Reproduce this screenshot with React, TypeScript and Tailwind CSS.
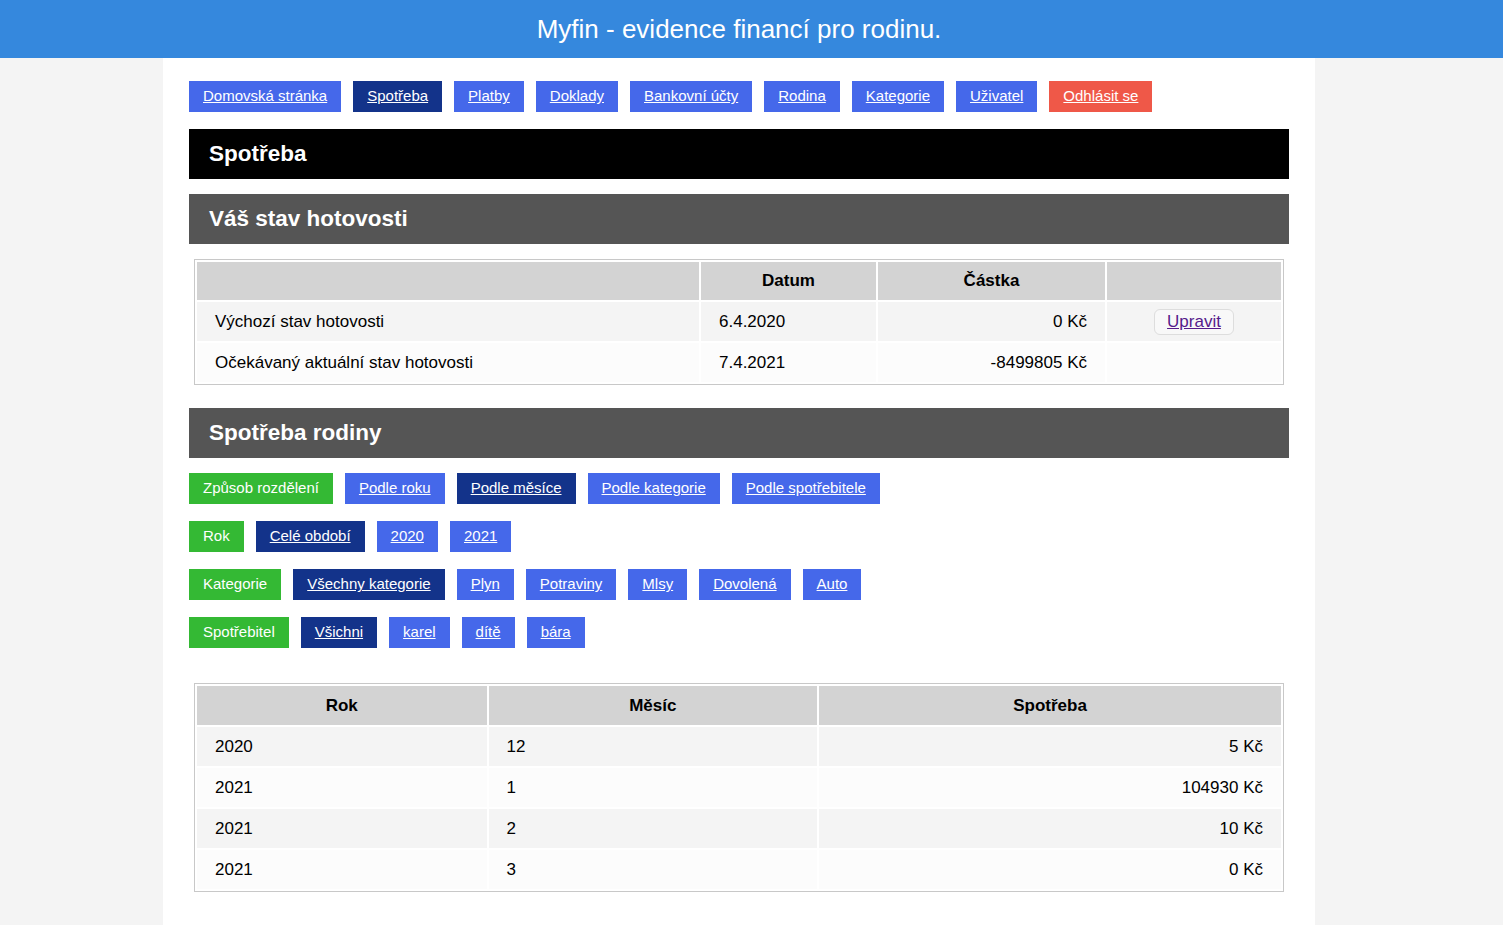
// Myfin – Spotřeba page
const nav = [
  { label: 'Domovská stránka' },
  { label: 'Spotřeba', active: true },
  { label: 'Platby' },
  { label: 'Doklady' },
  { label: 'Bankovní účty' },
  { label: 'Rodina' },
  { label: 'Kategorie' },
  { label: 'Uživatel' },
  { label: 'Odhlásit se', danger: true },
];

const filters = [
  {
    title: 'Způsob rozdělení',
    items: [
      { label: 'Podle roku' },
      { label: 'Podle měsíce', active: true },
      { label: 'Podle kategorie' },
      { label: 'Podle spotřebitele' },
    ],
  },
  {
    title: 'Rok',
    items: [{ label: 'Celé období', active: true }, { label: '2020' }, { label: '2021' }],
  },
  {
    title: 'Kategorie',
    items: [
      { label: 'Všechny kategorie', active: true },
      { label: 'Plyn' },
      { label: 'Potraviny' },
      { label: 'Mlsy' },
      { label: 'Dovolená' },
      { label: 'Auto' },
    ],
  },
  {
    title: 'Spotřebitel',
    items: [
      { label: 'Všichni', active: true },
      { label: 'karel' },
      { label: 'dítě' },
      { label: 'bára' },
    ],
  },
];

const spending = [
  { year: '2020', month: '12', amount: '5 Kč' },
  { year: '2021', month: '1', amount: '104930 Kč' },
  { year: '2021', month: '2', amount: '10 Kč' },
  { year: '2021', month: '3', amount: '0 Kč' },
];

type LinkItem = { label: string; active?: boolean; danger?: boolean };

const LinkButton = ({ item }: { item: LinkItem }) => {
  const bg = item.danger ? 'bg-[#ef5848]' : item.active ? 'bg-[#13338a]' : 'bg-[#4568ea]';
  return (
    <a href="#" className={`${bg} h-[31px] px-[14px] flex items-center text-white underline text-[15px]`}>
      {item.label}
    </a>
  );
};

const SectionTitle = ({ label, dark }: { label: string; dark?: boolean }) => (
  <div
    className={`${dark ? 'bg-black' : 'bg-[#555555]'} h-[50px] pl-5 pb-px flex items-center text-white font-bold text-[22.5px]`}
  >
    {label}
  </div>
);

const App = () => {
  const rowBg = (i: number) => (i % 2 === 0 ? 'bg-[#f4f4f4]' : 'bg-[#fcfcfc]');

  return (
    <div className="min-h-[925px] bg-[#f4f4f4] text-black font-['Liberation_Sans',Arial,sans-serif]">
      <header className="h-[58px] bg-[#3588dd] pr-[25px] flex items-center justify-center text-white text-[26px]">
        Myfin - evidence financí pro rodinu.
      </header>

      <main className="ml-[163px] w-[1152px] min-h-[867px] bg-white px-[26px] pt-[23px] pb-8">
        <nav className="flex gap-3">
          {nav.map((item) => (
            <LinkButton key={item.label} item={item} />
          ))}
        </nav>

        <div className="mt-[17px]">
          <SectionTitle label="Spotřeba" dark />
        </div>
        <div className="mt-[15px]">
          <SectionTitle label="Váš stav hotovosti" />
        </div>

        {/* Stav hotovosti */}
        <table className="mx-[5px] mt-[15px] w-[1090px] border border-[#c8c8c8] border-separate border-spacing-[2px] text-[17px]">
          <thead>
            <tr className="bg-[#d3d3d3] h-[38px]">
              <th className="w-[502px]"></th>
              <th className="w-[175px] font-bold">Datum</th>
              <th className="w-[227px] font-bold">Částka</th>
              <th className="w-[174px]"></th>
            </tr>
          </thead>
          <tbody>
            <tr className="bg-[#f4f4f4] h-[39px]">
              <td className="px-[18px]">Výchozí stav hotovosti</td>
              <td className="px-[18px]">6.4.2020</td>
              <td className="px-[18px] text-right">0 Kč</td>
              <td className="text-center">
                <a
                  href="#"
                  className="inline-block px-3 h-[26px] leading-[24px] border border-[#dddddd] rounded-md bg-[#f8f8f8] text-[#551a8b] underline"
                >
                  Upravit
                </a>
              </td>
            </tr>
            <tr className="bg-[#fcfcfc] h-[39px]">
              <td className="px-[18px]">Očekávaný aktuální stav hotovosti</td>
              <td className="px-[18px]">7.4.2021</td>
              <td className="px-[18px] text-right">-8499805 Kč</td>
              <td></td>
            </tr>
          </tbody>
        </table>

        <div className="mt-[23px]">
          <SectionTitle label="Spotřeba rodiny" />
        </div>

        {/* Filtry */}
        <div className="mt-[15px] flex flex-col gap-[17px]">
          {filters.map((group) => (
            <div key={group.title} className="flex gap-3">
              <span className="bg-[#34b934] h-[31px] px-[14px] flex items-center text-white text-[15px]">
                {group.title}
              </span>
              {group.items.map((item) => (
                <LinkButton key={item.label} item={item} />
              ))}
            </div>
          ))}
        </div>

        {/* Spotřeba podle měsíce */}
        <table className="mx-[5px] mt-[35px] w-[1090px] border border-[#c8c8c8] border-separate border-spacing-[2px] text-[17px]">
          <thead>
            <tr className="bg-[#d3d3d3] h-[39px]">
              <th className="w-[289px] font-bold">Rok</th>
              <th className="w-[328px] font-bold">Měsíc</th>
              <th className="w-[461px] font-bold">Spotřeba</th>
            </tr>
          </thead>
          <tbody>
            {spending.map((row, i) => (
              <tr key={i} className={`${rowBg(i)} h-[39px]`}>
                <td className="px-[18px]">{row.year}</td>
                <td className="px-[18px]">{row.month}</td>
                <td className="px-[18px] text-right">{row.amount}</td>
              </tr>
            ))}
          </tbody>
        </table>
      </main>
    </div>
  );
};

export default App;
